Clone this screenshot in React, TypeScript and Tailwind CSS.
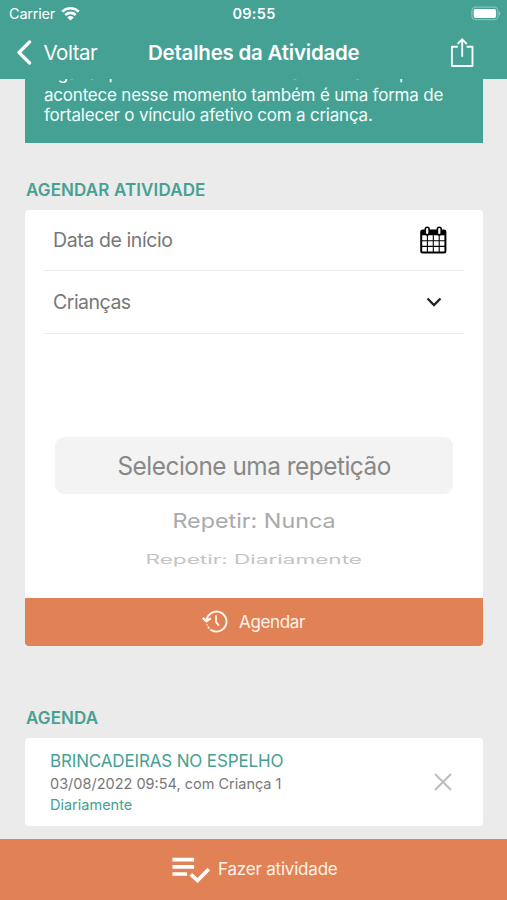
import type { ReactNode } from 'react';

const repeatOptions = ['Selecione uma repetição', 'Repetir: Nunca', 'Repetir: Diariamente'];

function WifiIcon() {
  return (
    <svg className="ml-[6px] h-[14px] w-[19px]" viewBox="0 0 19 14" fill="none" stroke="white" strokeWidth="2.6">
      <path d="M1.2 4.6a12 12 0 0 1 16.6 0" />
      <path d="M4.3 8a7.5 7.5 0 0 1 10.4 0" />
      <path d="M9.5 13.4 6.3 10.4a4.6 4.6 0 0 1 6.4 0z" fill="white" stroke="none" />
    </svg>
  );
}

function BatteryIcon() {
  return (
    <svg className="h-[15px] w-[30px]" viewBox="0 0 30 15" fill="none">
      <rect x="0.9" y="1.1" width="26" height="12.6" rx="3.8" stroke="white" strokeOpacity="0.35" strokeWidth="1.2" />
      <rect x="2.7" y="2.9" width="22.4" height="9" rx="2" fill="white" />
      <path d="M28.2 5.2c1.5.8 1.5 3.6 0 4.4z" fill="white" fillOpacity="0.5" />
    </svg>
  );
}

function ShareIcon() {
  return (
    <svg className="h-[30px] w-[24px]" viewBox="0 0 24 30" fill="none" stroke="#f2fffc" strokeWidth="1.9">
      <path d="M7.8 8.8H1.9v19.2h20.6V8.8h-5.9" strokeLinejoin="round" />
      <path d="M12.2 18.8V1.8M7.6 6l4.6-4.6L16.8 6" />
    </svg>
  );
}

function CalendarIcon() {
  return (
    <svg className="h-[28px] w-[27px]" viewBox="0 0 27 28">
      <rect x="1.2" y="4.6" width="24.2" height="21.8" rx="1.5" fill="white" stroke="black" strokeWidth="2" />
      <path d="M1 4h24.6v5.2H1z" fill="black" />
      <path d="M7.4 9v17M13.3 9v17M19.2 9v17M2 14.8h23M2 20.4h23" stroke="black" strokeWidth="1.1" />
      <rect x="5.3" y="1.2" width="3.8" height="7.6" rx="1.9" fill="white" stroke="black" strokeWidth="1.6" />
      <rect x="17.4" y="1.2" width="3.8" height="7.6" rx="1.9" fill="white" stroke="black" strokeWidth="1.6" />
    </svg>
  );
}

function HistoryIcon() {
  return (
    <svg className="h-[24px] w-[26px]" viewBox="0 0 26 24" fill="none" stroke="#fff3ea" strokeWidth="1.9">
      <path d="M4.6 10.2A10 10 0 1 1 9.8 20.4" />
      <path d="M9.8 20.4A10 10 0 0 1 5 14.4" strokeDasharray="1.8 1.6" />
      <path d="M0.8 7.8 4.4 11.2 8.8 8.2" strokeWidth="2.3" />
      <path d="M14 5.2v7l3 3.4" />
    </svg>
  );
}

function PlaylistCheckIcon() {
  return (
    <svg className="h-[27px] w-[38px]" viewBox="0 0 38 27" fill="none" stroke="white">
      <path d="M0.5 3.6h21.6M0.5 10.9h21.6M0.5 18h14.6" strokeWidth="3.6" />
      <path d="M18.8 18.3l6.7 6.2L36.8 13.1" strokeWidth="3.7" />
    </svg>
  );
}

function SectionTitle({ children }: { children: ReactNode }) {
  return <h2 className="h-5 pl-px text-[17px] leading-5 font-semibold tracking-[0.12px] text-[#45a193]">{children}</h2>;
}

export default function App() {
  return (
    <div className="flex h-[900px] w-[507px] flex-col overflow-hidden bg-[#ebebeb] font-['Inter',sans-serif]">
      <header className="h-[79px] shrink-0 bg-[#45a193] text-white">
        <div className="grid h-[27px] grid-cols-3 items-center pr-[6px] pl-[9px] text-[14.5px]">
          <div className="flex items-center">
            <span className="tracking-[-0.2px]">Carrier</span>
            <WifiIcon />
          </div>
          <span className="pr-[2px] text-center font-semibold tracking-[0.3px]">09:55</span>
          <div className="flex justify-end">
            <BatteryIcon />
          </div>
        </div>
        <div className="flex h-[52px] items-center pr-[33px] pl-[16px]">
          <button className="flex w-[132px] items-center">
            <svg className="h-[26px] w-[16px]" viewBox="0 0 16 26" fill="none" stroke="white" strokeWidth="3.2">
              <path d="M13.6 2 3 12.5 13.6 23" strokeLinecap="round" strokeLinejoin="round" />
            </svg>
            <span className="ml-[11.5px] text-[20.5px] tracking-[-0.5px]">Voltar</span>
          </button>
          <h1 className="flex-1 text-[20.5px] font-semibold tracking-[-0.22px] whitespace-nowrap">Detalhes da Atividade</h1>
          <ShareIcon />
        </div>
      </header>

      <main className="flex flex-1 flex-col px-[25px]">
        <div className="h-[64px] w-[457.5px] bg-[#45a193] pl-[19px] text-[17px] leading-[20.5px] tracking-[-0.21px] whitespace-nowrap text-[#f2fffc]">
          {/* scrolled paragraph, only the bottom of this line is still visible */}
          <p className="flex h-[5.5px] items-end overflow-hidden pb-[1.5px] tracking-[-0.16px]">
            lugar a que ele se refere. A troca de olhares que
          </p>
          <p>acontece nesse momento também é uma forma de</p>
          <p>fortalecer o vínculo afetivo com a criança.</p>
        </div>

        <div className="mt-[37px]">
          <SectionTitle>AGENDAR ATIVIDADE</SectionTitle>
        </div>
        <section className="mt-[10px] flex h-[436px] w-[457.5px] shrink-0 flex-col overflow-hidden rounded-[4px] bg-white">
          <div className="mx-[19px] flex h-[61px] items-center justify-between border-b border-[#ebebeb] pr-[17px] pl-[9px]">
            <span className="pt-[2px] text-[19.5px] tracking-[-0.4px] text-[#777]">Data de início</span>
            <CalendarIcon />
          </div>
          <div className="mx-[19px] flex h-[63px] items-center justify-between border-b border-[#ebebeb] pr-[22px] pl-[9px]">
            <span className="pt-[1px] text-[19.5px] tracking-[-0.5px] text-[#777]">Crianças</span>
            <svg className="h-[10px] w-[16px]" viewBox="0 0 16 10" fill="none" stroke="#222" strokeWidth="2.3">
              <path d="M1.5 1.5 8 8l6.5-6.5" />
            </svg>
          </div>
          <div className="flex flex-1 flex-col items-center pt-[103px] whitespace-nowrap">
            <div className="flex h-[57px] w-[398px] items-center justify-center rounded-[9px] bg-[#f3f3f3] text-[25.5px] tracking-[-0.5px] text-[#888]">
              <span className="scale-x-[0.955] pt-[2px]">{repeatOptions[0]}</span>
            </div>
            <div className="mt-[12px] flex h-[30px] scale-x-[1.06] scale-y-[0.92] items-center text-[22px] text-[#aaa]">
              {repeatOptions[1]}
            </div>
            <div className="mt-[9px] flex h-[30px] scale-x-[1.075] scale-y-[0.6] items-center text-[21px] text-[#c4c4c4]">
              {repeatOptions[2]}
            </div>
          </div>
          <button className="flex h-[48px] w-full items-center bg-[#e18256] pl-[177px] text-[#fff3ea]">
            <HistoryIcon />
            <span className="ml-[11px] pt-[2px] text-[17px] tracking-[-0.35px]">Agendar</span>
          </button>
        </section>

        <div className="mt-[62px]">
          <SectionTitle>AGENDA</SectionTitle>
        </div>
        <section className="mt-[10px] flex h-[88px] w-[457.5px] shrink-0 items-center justify-between rounded-[4px] bg-white pr-[31px] pl-[25px]">
          <div className="whitespace-nowrap">
            <h3 className="text-[17px] leading-[24px] tracking-[-0.15px] text-[#45a193]">BRINCADEIRAS NO ESPELHO</h3>
            <p className="text-[14.5px] leading-[22px] text-[#777]">03/08/2022 09:54, com Criança 1</p>
            <p className="text-[14.5px] leading-[20px] text-[#45a193]">Diariamente</p>
          </div>
          <svg className="h-[18px] w-[18px]" viewBox="0 0 18 18" stroke="#bdbdbd" strokeWidth="2">
            <path d="M1 1l16 16M17 1 1 17" />
          </svg>
        </section>
      </main>

      <button className="flex h-[61px] shrink-0 items-center bg-[#e18256] pl-[172px] text-[#fff3ea]">
        <PlaylistCheckIcon />
        <span className="ml-[8px] pt-px text-[17px] tracking-[-0.2px]">Fazer atividade</span>
      </button>
    </div>
  );
}
